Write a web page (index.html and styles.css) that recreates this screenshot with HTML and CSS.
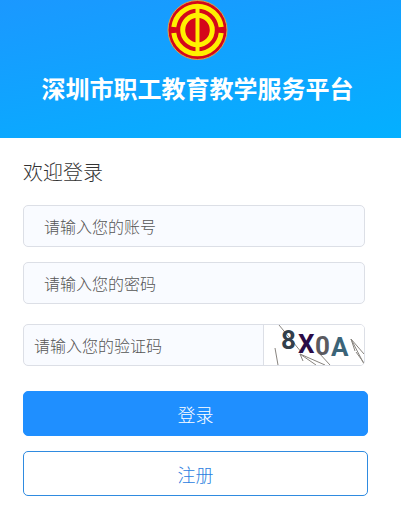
FILE: index.html
```html
<!DOCTYPE html>
<html lang="zh-CN">
<head>
  <meta charset="UTF-8">
  <meta name="viewport" content="width=device-width, initial-scale=1">
  <title>深圳市职工教育教学服务平台</title>
  <link rel="stylesheet" href="styles.css">
</head>
<body>

  <!-- Banner -->
  <header class="banner">
    <svg class="logo" viewBox="0 0 60 60" aria-hidden="true">
      <circle cx="30" cy="30" r="29.5" fill="#d4071a" stroke="#e0a344" stroke-width="1"/>
      <g fill="none" stroke="#fff000">
        <path stroke-width="5" d="M6.3 27A23.9 23.9 0 0 1 53.7 27"/>
        <path stroke-width="5" d="M6.3 33A23.9 23.9 0 0 0 53.7 33"/>
        <circle stroke-width="5" cx="30" cy="30" r="14.8"/>
        <path stroke-width="4" d="M30 7V53"/>
      </g>
    </svg>
    <h1 class="title">深圳市职工教育教学服务平台</h1>
  </header>

  <!-- Login form -->
  <main class="login">
    <h2 class="welcome">欢迎登录</h2>
    <form>
      <div class="fields">
        <input class="field" type="text" name="account" placeholder="请输入您的账号" aria-label="账号">
        <input class="field" type="password" name="password" placeholder="请输入您的密码" aria-label="密码">
        <div class="code">
          <input class="code-input" type="text" name="code" placeholder="请输入您的验证码" aria-label="验证码">
          <svg class="captcha" viewBox="0 0 100 40" role="img" aria-label="验证码图片">
            <g fill="none" stroke="#88847f" stroke-width="1">
              <path d="M15 0L38 28M11 23L14 40M36 29L61 40M36 29L52 40M36 29L39 36M55 28L66 40M87 14L100 39M87 14L100 29M87 14L91 26M92 27L100 38"/>
            </g>
            <g class="captcha-text">
              <text x="17" y="24" fill="#323f4b">8</text>
              <text x="34" y="28" fill="#2b0b46">X</text>
              <text x="51" y="30" fill="#5b5a60">0</text>
              <text x="67" y="31" fill="#3b6478">A</text>
            </g>
          </svg>
        </div>
      </div>
      <div class="actions">
        <button class="btn btn-login" type="submit">登录</button>
        <button class="btn btn-register" type="button">注册</button>
      </div>
    </form>
  </main>

</body>
</html>
```
FILE: styles.css
```css
* {
  box-sizing: border-box;
}
body {
  margin: 0;
  background-color: #fff;
  color: #333;
  font-family: "Noto Sans CJK SC", sans-serif;
}
.banner {
  display: flex;
  flex-direction: column;
  align-items: center;
  gap: 11px;
  padding: 0 6px 33px 0;
  background: linear-gradient(170deg, #1b98ff, #04b0ff);
}
.logo {
  width: 61px;
  height: 60px;
}
.title {
  margin: 0;
  color: #fff;
  font-size: 24px;
  font-weight: 700;
  line-height: 34px;
}
.login {
  padding: 20px 33px 12px 23px;
}
.welcome {
  margin: 0 0 19px;
  font-size: 20px;
  font-weight: 300;
  line-height: 28px;
}
.fields {
  margin-right: 3px;
}
.field,
.code {
  display: block;
  width: 100%;
  height: 42px;
  margin-bottom: 15px;
  border: 1px solid #dcdfe6;
  border-radius: 5px;
  background-color: #f9fbff;
}
.field,
.code-input {
  padding: 0 20px;
  color: #333;
  font-family: inherit;
  font-size: 16px;
  font-weight: 300;
}
.field::placeholder,
.code-input::placeholder {
  color: #555;
  opacity: 1;
}
.code {
  display: flex;
  margin: 20px 0 25px;
  overflow: hidden;
}
.code-input {
  flex: 1;
  min-width: 0;
  padding: 0 10px;
  border: 0;
  border-right: 1px solid #dcdfe6;
  background: none;
}
.captcha {
  width: 100px;
  height: 40px;
  background-color: #fff;
}
.captcha-text {
  font-family: Roboto, sans-serif;
  font-size: 26px;
  font-weight: 700;
}
.actions {
  display: flex;
  flex-direction: column;
  gap: 15px;
}
.btn {
  height: 45px;
  border: 1px solid #1f8fff;
  border-radius: 5px;
  font-family: inherit;
  font-size: 18px;
  font-weight: 300;
}
.btn-login {
  background-color: #1f8fff;
  color: #fff;
}
.btn-register {
  border-color: #2f8be0;
  background-color: #fff;
  color: #2b80e0;
}
```
